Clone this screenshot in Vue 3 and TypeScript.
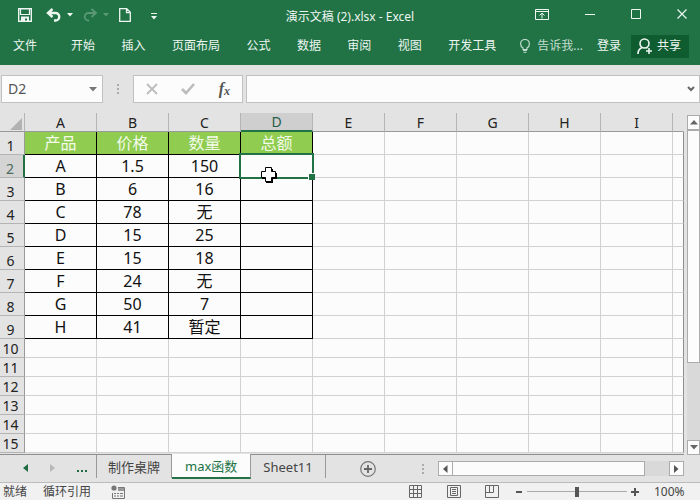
<script setup lang="ts">
import { ref } from 'vue'

interface SheetRow {
  num: number
  cells: string[]
}

const columns: string[] = ['A', 'B', 'C', 'D', 'E', 'F', 'G', 'H', 'I']
const menus: string[] = ['开始', '插入', '页面布局', '公式', '数据', '审阅', '视图', '开发工具']

const data: string[][] = [
  ['产品', '价格', '数量', '总额'],
  ['A', '1.5', '150', ''],
  ['B', '6', '16', ''],
  ['C', '78', '无', ''],
  ['D', '15', '25', ''],
  ['E', '15', '18', ''],
  ['F', '24', '无', ''],
  ['G', '50', '7', ''],
  ['H', '41', '暂定', ''],
]

const rows: SheetRow[] = Array.from({ length: 15 }, (_, i) => ({
  num: i + 1,
  cells: columns.map((_c, c) => data[i]?.[c] ?? ''),
}))

const activeCol = 3
const activeRow = 2
const cellName = ref('D2')
const formula = ref('')
const zoom = ref(100)

function cellClass(row: number, col: number) {
  return {
    filled: row <= data.length && col < 4,
    heading: row === 1 && col < 4,
    selected: row === activeRow && col === activeCol,
  }
}
</script>

<template>
  <div class="app">
    <header class="top">
      <div class="titlebar">
        <div class="quick">
          <button class="save" aria-label="保存">
            <svg width="14" height="14" viewBox="0 0 14 14"><path d="M.7.7h12.600v12.600H.7z" fill="none" stroke="currentColor" stroke-width="1.400" /><path d="M2.500 1v5.500h9V1" fill="none" stroke="currentColor" stroke-width="1.200" /><path d="M3 8.500h8V13H9v-2.500H7V13H3z" fill="currentColor" /></svg>
          </button>
          <button class="undo" aria-label="撤消">
            <svg width="16" height="14" viewBox="0 0 16 14"><path d="M2 5h7.500a3.700 3.700 0 0 1 0 7.500H8M6.500 1L2 5l4.500 4" fill="none" stroke="currentColor" stroke-width="2.400" /></svg>
            <svg width="6" height="4" viewBox="0 0 6 4"><path d="M0 0h6L3 3.500z" fill="currentColor" /></svg>
          </button>
          <button class="redo" aria-label="恢复" disabled>
            <svg width="16" height="14" viewBox="0 0 16 14"><path d="M14 5H6.500a3.700 3.700 0 0 0 0 7.500H7M9.500 1L14 5l-4.500 4" fill="none" stroke="currentColor" stroke-width="1.800" /></svg>
            <svg width="6" height="4" viewBox="0 0 6 4"><path d="M0 0h6L3 3.500z" fill="currentColor" /></svg>
          </button>
          <button class="new" aria-label="新建">
            <svg width="12" height="14" viewBox="0 0 12 14"><path d="M.7.7h7l3.600 3.600v9H.7z M7.500.7v4h4" fill="none" stroke="currentColor" stroke-width="1.300" /></svg>
          </button>
          <button class="more" aria-label="自定义快速访问工具栏">
            <svg width="6" height="7" viewBox="0 0 6 7"><path d="M0 0h6v1H0zM0 3h6L3 6.500z" fill="currentColor" /></svg>
          </button>
        </div>
        <h1>演示文稿 (2).xlsx - Excel</h1>
        <div class="window">
          <button aria-label="功能区显示选项">
            <svg width="14" height="12" viewBox="0 0 14 12"><path d="M.5.5h13v10H.5zM.5 2.500h13M7 9.500V4.500M4.500 6.500L7 4l2.500 2.500" fill="none" stroke="currentColor" /></svg>
          </button>
          <button aria-label="最小化">
            <svg width="10" height="12" viewBox="0 0 10 12"><path d="M0 5.500h10" stroke="currentColor" /></svg>
          </button>
          <button aria-label="最大化">
            <svg width="10" height="12" viewBox="0 0 10 12"><path d="M.5.500h9v9h-9z" fill="none" stroke="currentColor" /></svg>
          </button>
          <button aria-label="关闭">
            <svg width="10" height="12" viewBox="0 0 10 12"><path d="M.5.500l9 9M9.500.500l-9 9" stroke="currentColor" stroke-width="1.200" /></svg>
          </button>
        </div>
      </div>
      <div class="ribbon">
        <button class="file">文件</button>
        <nav>
          <button v-for="m in menus" :key="m">{{ m }}</button>
        </nav>
        <button class="tell">
          <svg width="10" height="14" viewBox="0 0 10 14"><path d="M3 10.500V9C1.500 8 .6 6.500.6 4.900a4.400 4.400 0 0 1 8.800 0C9.400 6.500 8.500 8 7 9v1.500z" fill="none" stroke="currentColor" stroke-width="1.200" /><path d="M3 11.500h4M3.500 13.300h3" stroke="currentColor" /></svg>
          <span>告诉我...</span>
        </button>
        <button class="login">登录</button>
        <button class="share">
          <svg width="16" height="17" viewBox="0 0 16 17"><circle cx="7.500" cy="5.500" r="4.500" fill="none" stroke="currentColor" stroke-width="1.600" /><path d="M1 16c0-3.500 1.500-5.500 4-6.500M9.500 9.500l1 .7M12 10v6M9 13h6" fill="none" stroke="currentColor" stroke-width="1.600" /></svg>
          <span>共享</span>
        </button>
      </div>
    </header>

    <section class="formula-bar">
      <div class="namebox">
        <input v-model="cellName" aria-label="名称框" />
        <button aria-label="名称列表">
          <svg width="8" height="5" viewBox="0 0 8 5"><path d="M0 0h8L4 4.500z" fill="#777" /></svg>
        </button>
      </div>
      <svg class="grip" width="3" height="12" viewBox="0 0 3 12"><path d="M0 1h2v2H0zM0 5h2v2H0zM0 9h2v2H0z" fill="#aaa" /></svg>
      <div class="entry">
        <button aria-label="取消">
          <svg width="12" height="12" viewBox="0 0 12 12"><path d="M1 1l10 10M11 1L1 11" stroke="#bcbcbc" stroke-width="1.800" /></svg>
        </button>
        <button aria-label="输入">
          <svg width="14" height="12" viewBox="0 0 14 12"><path d="M1 6l4 4 8-9" fill="none" stroke="#bcbcbc" stroke-width="2.600" /></svg>
        </button>
        <button class="fx" aria-label="插入函数"><i>f</i><i class="sub">x</i></button>
      </div>
      <div class="formula">
        <input v-model="formula" aria-label="编辑栏" />
        <button aria-label="展开编辑栏">
          <svg width="8" height="6" viewBox="0 0 8 6"><path d="M1 1l3 3 3-3" fill="none" stroke="#666" stroke-width="2" /></svg>
        </button>
      </div>
    </section>

    <main class="work">
      <div class="sheet">
        <table>
          <colgroup>
            <col class="col-num" />
            <col v-for="c in columns" :key="c" class="col-data" />
            <col />
          </colgroup>
          <thead>
            <tr>
              <th class="corner" aria-label="全选">
                <svg width="12" height="12" viewBox="0 0 12 12"><path d="M12 0v12H0z" fill="#b2b2b2" /></svg>
              </th>
              <th v-for="(c, i) in columns" :key="c" scope="col" :class="{ active: i === activeCol }">{{ c }}</th>
              <th class="rest"></th>
            </tr>
          </thead>
          <tbody>
            <tr v-for="r in rows" :key="r.num" :class="{ tall: r.num <= 9 }">
              <th scope="row" :class="{ active: r.num === activeRow }">{{ r.num }}</th>
              <td v-for="(v, c) in r.cells" :key="c" :class="cellClass(r.num, c)">
                {{ v }}
                <template v-if="r.num === activeRow && c === activeCol">
                  <span class="selection"></span>
                  <svg class="pointer" width="16" height="16" viewBox="0 0 16 16"><path d="M5 2h7v4h4v6h-4v4H5v-4H1V6h4z" fill="#000" /><path d="M4.500.500h6v4h4v6h-4v4h-6v-4h-4v-6h4z" fill="#fff" stroke="#000" /></svg>
                </template>
              </td>
              <td class="rest"></td>
            </tr>
          </tbody>
        </table>
      </div>
      <div class="vscroll">
        <button aria-label="向上滚动">
          <svg width="8" height="5" viewBox="0 0 8 5"><path d="M0 4.500h8L4 0z" fill="#666" /></svg>
        </button>
        <div class="vtrack"><div class="vthumb"></div></div>
        <button aria-label="向下滚动">
          <svg width="8" height="5" viewBox="0 0 8 5"><path d="M0 0h8L4 4.500z" fill="#666" /></svg>
        </button>
      </div>
    </main>

    <section class="tabs">
      <div class="tabnav">
        <button aria-label="上一个工作表"><svg width="5" height="8" viewBox="0 0 5 8"><path d="M5 0v8L0 4z" fill="#1e6b41" /></svg></button>
        <button aria-label="下一个工作表"><svg width="5" height="8" viewBox="0 0 5 8"><path d="M0 0v8l5-4z" fill="#b8b8b8" /></svg></button>
        <button aria-label="更多工作表"><svg width="11" height="8" viewBox="0 0 11 8"><path d="M0 6h2v2H0zM4 6h2v2H4zM8 6h2v2H8z" fill="#1e6b41" /></svg></button>
      </div>
      <button class="tab first">制作桌牌</button>
      <button class="tab current">max函数</button>
      <button class="tab last">Sheet11</button>
      <button class="add" aria-label="新工作表">
        <svg width="16" height="16" viewBox="0 0 16 16"><circle cx="8" cy="8" r="7.300" fill="none" stroke="#777" stroke-width="1.200" /><path d="M8 4v8M4 8h8" stroke="#666" stroke-width="1.800" /></svg>
      </button>
      <div class="hwrap">
        <svg class="grip" width="3" height="12" viewBox="0 0 3 12"><path d="M0 1h2v2H0zM0 5h2v2H0zM0 9h2v2H0z" fill="#aaa" /></svg>
        <div class="hscroll">
          <button aria-label="向左滚动"><svg width="5" height="8" viewBox="0 0 5 8"><path d="M4.500 0v8L0 4z" fill="#555" /></svg></button>
          <div class="htrack"><div class="hthumb"></div></div>
          <button aria-label="向右滚动"><svg width="5" height="8" viewBox="0 0 5 8"><path d="M0 0v8l4.500-4z" fill="#555" /></svg></button>
        </div>
      </div>
    </section>

    <footer class="status">
      <span>就绪</span>
      <span>循环引用</span>
      <svg class="macro" width="14" height="14" viewBox="0 0 14 14"><path d="M7 2.500h6.500v11h-12V8" fill="none" stroke="#777" /><circle cx="3" cy="3" r="2.600" fill="#777" /><path d="M7 3h6v3H7z" fill="#999" /><path d="M3 8h2v1H3zM6 8h2v1H6zM9 8h3v1H9zM3 10.500h2v1H3zM6 10.500h2v1H6zM9 10.500h3v1H9z" fill="#777" /></svg>
      <div class="views">
        <button aria-label="普通"><svg width="14" height="14" viewBox="0 0 14 14"><path d="M.5.5h12v12H.5zM4.500.5v12M8.500.5v12M.5 4.500h12M.5 8.500h12" fill="none" stroke="#666" /></svg></button>
        <button aria-label="页面布局视图"><svg width="14" height="14" viewBox="0 0 14 14"><path d="M.5.5h13v12H.5zM3.500 2.500h7v8h-7zM5 4.500h4M5 6.500h4M5 8.500h4" fill="none" stroke="#666" /></svg></button>
        <button aria-label="分页预览"><svg width="14" height="14" viewBox="0 0 14 14"><path d="M.5.5h13v12H.5zM.5 7.500h8V.5M4.500.5v7" fill="none" stroke="#666" /></svg></button>
      </div>
      <button class="step" aria-label="缩小"><svg width="8" height="8" viewBox="0 0 8 8"><path d="M1 4h6" stroke="#555" stroke-width="2" /></svg></button>
      <input v-model="zoom" type="range" min="0" max="200" aria-label="显示比例" />
      <button class="step" aria-label="放大"><svg width="8" height="8" viewBox="0 0 8 8"><path d="M0 4h8M4 0v8" stroke="#555" stroke-width="2" /></svg></button>
      <output>{{ zoom }}%</output>
    </footer>
  </div>
</template>

<style>
body {
  margin: 0;
}
</style>

<style scoped>
.app {
  display: flex;
  flex-direction: column;
  height: 100vh;
  overflow: hidden;
  background: #e3e3e3;
  color: #222;
  font-family: 'Noto Sans', 'Noto Sans CJK SC', sans-serif;
  font-size: 12px;
  line-height: 16px;
}
.app * {
  box-sizing: border-box;
}
button {
  display: flex;
  align-items: center;
  justify-content: center;
  padding: 0;
  border: 0;
  background: none;
  color: inherit;
  font: inherit;
  white-space: nowrap;
}
input {
  min-width: 0;
  margin: 0;
  padding: 0;
  border: 0;
  outline: 0;
  background: none;
  color: inherit;
  font: inherit;
}
svg {
  display: block;
  flex: none;
}
.top {
  flex: none;
  height: 65px;
  background: #217346;
  color: #eef6f1;
}
.titlebar {
  display: grid;
  grid-template-columns: 1fr auto 1fr;
  align-items: center;
  height: 29px;
  padding: 0 13px;
}
.quick {
  display: flex;
  align-items: center;
  padding-left: 5px;
}
.undo,
.redo {
  gap: 5px;
  margin-left: 14px;
}
.redo {
  margin-left: 9px;
  color: #5a9876;
}
.new {
  margin-left: 10px;
}
.more {
  margin: 3px 0 0 20px;
}
h1 {
  margin: 4px 0 0;
  font-size: 12px;
  font-weight: 400;
}
.window {
  display: flex;
  justify-content: flex-end;
  gap: 36px;
}
.ribbon {
  display: flex;
  align-items: center;
  height: 34px;
  padding: 0 11px 0 13px;
}
nav {
  display: flex;
  flex: 1;
  justify-content: space-between;
  margin: 0 24px 0 34px;
}
.tell {
  gap: 7px;
  color: #c3dccf;
}
.login {
  margin: 0 10px 0 14px;
}
.share {
  gap: 4px;
  height: 23px;
  padding: 0 8px 0 6px;
  background: #0f5c30;
}
.formula-bar {
  display: flex;
  flex: none;
  align-items: center;
  height: 48px;
  padding-left: 1px;
}
.namebox,
.entry,
.formula {
  display: flex;
  align-items: center;
  height: 28px;
  border: 1px solid #c1c1c1;
  background: #fcfcfc;
}
.namebox {
  width: 102px;
  padding: 0 5px 0 6px;
  color: #555;
  font-size: 14px;
}
.namebox input {
  flex: 1;
}
.grip {
  margin: 0 13px 0 14px;
}
.entry {
  justify-content: space-between;
  width: 110px;
  padding: 0 12px;
}
.fx {
  color: #555;
  font-family: 'Liberation Serif', serif;
  font-size: 16px;
  font-weight: 700;
}
.fx .sub {
  padding-top: 3px;
  font-size: 12px;
}
.formula {
  flex: 1;
  margin-left: 3px;
  padding: 0 4px 0 6px;
}
.formula input {
  flex: 1;
}
.work {
  display: flex;
  flex: 1;
  min-height: 0;
}
.sheet {
  flex: 1;
  min-width: 0;
  overflow: hidden;
  border-bottom: 1px solid #8e8e8e;
}
table {
  width: 100%;
  border-spacing: 0;
  table-layout: fixed;
}
.col-num {
  width: 25px;
}
.col-data {
  width: 72px;
}
th,
td {
  position: relative;
  height: 19px;
  padding: 0;
  border: solid #d2d2d2;
  border-width: 0 1px 1px 0;
  line-height: 16px;
  text-align: center;
}
th {
  border-color: #b4b4b4;
  background: #e3e3e3;
  font-size: 14px;
  font-weight: 400;
}
thead th {
  padding-top: 2px;
  border-bottom-color: #999;
}
thead th.rest {
  border-right-color: transparent;
}
thead th.active {
  padding-top: 1px;
  border-bottom: 2px solid #217346;
  background: #cfcfcf;
  color: #24604a;
}
.corner svg {
  margin: 1px 2px 0 auto;
}
tbody th {
  padding: 2px 3px 0 0;
  border-right-color: #999;
}
tbody th.active {
  border-right: 2px solid #217346;
  background: #d4d4d4;
  color: #4d6b5c;
}
.tall th {
  height: 23px;
  padding-top: 5px;
}
td {
  background: #fcfcfc;
  color: #111;
  font-size: 16px;
}
.tall td {
  height: 23px;
  line-height: 22px;
}
td.rest {
  border-right-color: #8e8e8e;
}
td.filled {
  border-color: #000;
}
td.heading {
  background: #8fcc50;
  color: #f4faea;
}
.selection {
  position: absolute;
  z-index: 1;
  inset: -2px;
  border: 2px solid #217346;
}
.selection::after {
  position: absolute;
  right: -3px;
  bottom: -3px;
  width: 6px;
  height: 6px;
  border: solid #fcfcfc;
  border-width: 1px 0 0 1px;
  background: #217346;
  content: '';
}
.pointer {
  position: absolute;
  z-index: 2;
  top: 12px;
  left: 20px;
}
.vscroll {
  display: flex;
  flex-direction: column;
  width: 13px;
  margin: 2px 0 0 3px;
}
.vscroll button,
.hscroll button {
  flex: none;
  border: 1px solid #ababab;
  background: #fcfcfc;
}
.vscroll button {
  height: 15px;
}
.vtrack {
  flex: 1;
  background: #d9d9d9;
}
.vthumb {
  height: 75%;
  border: 1px solid #ababab;
  background: #fcfcfc;
}
.tabs {
  display: flex;
  flex: none;
  height: 27px;
  padding-right: 16px;
  color: #444;
  font-size: 13px;
}
.tabnav {
  display: flex;
  align-items: center;
  justify-content: space-between;
  width: 96px;
  padding: 0 8px 1px 23px;
}
.tab {
  height: 23px;
  padding: 0 12px;
  border-right: 1px solid #999;
}
.tab.first {
  padding: 0 11px;
  border-left: 1px solid #999;
}
.tab.current {
  height: 25px;
  margin-top: -1px;
  padding: 0 13px;
  border-bottom: 2px solid #217346;
  background: #fcfcfc;
  color: #217346;
}
.add {
  margin-left: 34px;
}
.hwrap {
  display: flex;
  flex: 1;
  align-items: center;
  justify-content: flex-end;
}
.hscroll {
  display: flex;
  flex: 1;
  max-width: 246px;
  height: 15px;
}
.hscroll button {
  width: 15px;
}
.htrack {
  flex: 1;
  background: #d9d9d9;
}
.hthumb {
  width: 89%;
  height: 100%;
  border: solid #ababab;
  border-width: 1px 1px 1px 0;
  background: #fcfcfc;
}
.status {
  display: flex;
  flex: none;
  align-items: center;
  height: 18px;
  padding: 0 15px 0 3px;
  border-top: 1px solid #bcbcbc;
  background: #f1f1f1;
  color: #444;
}
.status span {
  margin-right: 16px;
}
.macro {
  margin-left: 4px;
}
.views {
  display: flex;
  flex: 1;
  justify-content: flex-end;
  gap: 24px;
  margin-right: 16px;
}
.status input {
  width: 100px;
  height: 12px;
  margin: 0 4px;
  appearance: none;
}
.status input::-webkit-slider-runnable-track {
  height: 10px;
  background: linear-gradient(#aaa, #aaa) center / 100% 1px no-repeat;
}
.status input::-webkit-slider-thumb {
  width: 4px;
  height: 10px;
  background: #555;
  appearance: none;
}
output {
  min-width: 31px;
  margin-left: 15px;
}
</style>
